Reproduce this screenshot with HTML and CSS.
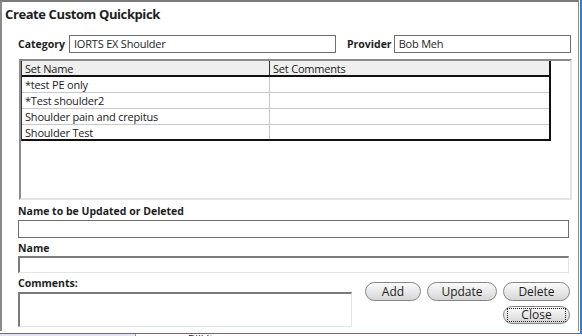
FILE: index.html
```html
<!DOCTYPE html>
<html>
<head>
<meta charset="utf-8">
<link rel="stylesheet" href="styles.css">
</head>
<body>
<div class="screen">
  <div class="dialog">
    <div class="title">Create Custom Quickpick</div>
    <div class="row-top">
      <span class="lbl">Category</span>
      <div class="input cat">IORTS EX Shoulder</div>
      <span class="lbl prov-lbl">Provider</span>
      <div class="input prov">Bob Meh</div>
    </div>
    <div class="grid">
      <div class="table">
        <div class="tr th"><div class="c1">Set Name</div><div class="c2">Set Comments</div></div>
        <div class="tr"><div class="c1">*test PE only</div><div class="c2"></div></div>
        <div class="tr"><div class="c1">*Test shoulder2</div><div class="c2"></div></div>
        <div class="tr"><div class="c1">Shoulder pain and crepitus</div><div class="c2"></div></div>
        <div class="tr last"><div class="c1">Shoulder Test</div><div class="c2"></div></div>
      </div>
    </div>
    <div class="lbl block l-upd">Name to be Updated or Deleted</div>
    <div class="input wide upd"></div>
    <div class="lbl block l-name">Name</div>
    <div class="input wide sunken name-in"></div>
    <div class="bottom">
      <div class="comments">
        <div class="lbl block l-com">Comments:</div>
        <div class="input area sunken"></div>
      </div>
      <div class="buttons">
        <div class="btn-row">
          <div class="btn add">Add</div>
          <div class="btn upd-btn">Update</div>
          <div class="btn del">Delete</div>
        </div>
        <div class="btn-row">
          <div class="btn close"><span class="focus">Close</span></div>
        </div>
      </div>
    </div>
  </div>
  <div class="edge"></div>
</div>
<div class="taskbar">
  <div class="tb-left"></div>
  <div class="tb-text">Bill Items</div>
</div>
</body>
</html>
```
FILE: styles.css
```css
html, body {
  margin: 0;
  padding: 0;
  width: 582px;
  height: 336px;
  overflow: hidden;
  background: #ffffff;
  font-family: "Open Sans", "Noto Sans", sans-serif;
  color: #1a1a1a;
}
.screen {
  display: flex;
  height: 333px;
}
.dialog {
  width: 579px;
  height: 331px;
  box-sizing: border-box;
  border-top: 2px solid #7a7a7a;
  border-left: 2px solid #8a8a8a;
  border-right: 1px solid #8a8a8a;
  padding-left: 16px;
  background: #fff;
}
.edge {
  width: 3px;
  border-right: 2px solid #2a82d8;
  box-sizing: border-box;
}
.title {
  font-weight: 700;
  font-size: 13px;
  letter-spacing: -0.4px;
  line-height: 18px;
  margin-top: 3px;
  margin-left: -13px;
  color: #1e1e1e;
}
.lbl {
  font-weight: 700;
  font-size: 10.5px;
  color: #1e1e1e;
  white-space: nowrap;
}
.row-top {
  display: flex;
  align-items: center;
  margin-top: 12px;
  height: 18px;
}
.input {
  box-sizing: border-box;
  border: 1px solid #6e6e6e;
  background: #fff;
  font-size: 11px;
  letter-spacing: -0.2px;
  line-height: 16px;
  padding-left: 4px;
  color: #1e1e1e;
  height: 18px;
}
.cat {
  width: 267px;
  margin-left: 4px;
}
.prov-lbl {
  margin-left: 11px;
}
.prov {
  width: 177px;
  margin-left: 2px;
}
.grid {
  margin-top: 6px;
  margin-left: 1px;
  width: 553px;
  height: 141px;
  box-sizing: border-box;
  border-top: 2px solid #8c8c8c;
  border-left: 2px solid #8c8c8c;
  border-right: 2px solid #e4e4e4;
  border-bottom: 2px solid #e4e4e4;
}
.table {
  width: 530px;
  box-sizing: border-box;
  border-left: 1px solid #333;
  border-right: 2px solid #111;
}
.tr {
  display: flex;
  height: 16px;
  box-sizing: border-box;
  border-bottom: 1px solid #c8c8c8;
  font-size: 11px;
  letter-spacing: -0.2px;
  line-height: 15px;
}
.tr.th {
  background: #efefef;
  border-bottom: 2px solid #111;
}
.tr.last {
  border-bottom: 2px solid #111;
}
.c1 {
  width: 248px;
  box-sizing: border-box;
  padding-left: 3px;
  border-right: 1px solid #c8c8c8;
  white-space: nowrap;
}
.th .c1 {
  border-right: 1px solid #333;
}
.c2 {
  flex: 1;
  padding-left: 3px;
}
.block {
  display: block;
  line-height: 14px;
}
.l-upd { margin-top: 4px; }
.wide {
  width: 551px;
}
.upd { margin-top: 2px; }
.l-name { margin-top: 3px; }
.sunken {
  border-top: 2px solid #7a7a7a;
  border-left: 2px solid #7a7a7a;
  border-right: 1px solid #e4e4e4;
  border-bottom: 1px solid #e4e4e4;
}
.name-in {
  margin-top: 1px;
  height: 17px;
}
.bottom {
  display: flex;
  justify-content: space-between;
  margin-top: 3px;
  width: 552px;
}
.l-com { margin-bottom: 2px; }
.area {
  width: 334px;
  height: 35px;
}
.buttons {
  display: flex;
  flex-direction: column;
  align-items: flex-end;
  gap: 5px;
  margin-top: 6px;
}
.btn-row {
  display: flex;
  gap: 6px;
}
.btn {
  box-sizing: border-box;
  height: 19px;
  border: 1px solid #858585;
  border-radius: 10px;
  background: linear-gradient(#fbfbfb, #e9e9e9 50%, #d6d6d6);
  font-size: 12px;
  line-height: 17px;
  text-align: center;
  color: #1e1e1e;
}
.add { width: 56px; }
.upd-btn { width: 70px; }
.del { width: 67px; }
.close {
  width: 67px;
  height: 18px;
  padding: 1px 3px;
  line-height: 14px;
}
.focus {
  display: block;
  border: 1px dotted #222;
  height: 14px;
  box-sizing: border-box;
  line-height: 12px;
}
.taskbar {
  height: 3px;
  border-top: 1px solid #2a7bd0;
  display: flex;
  overflow: hidden;
}
.tb-left {
  width: 135px;
  background: #dce8f4;
  border-right: 1px solid #8a9bb0;
}
.tb-text {
  margin-left: 52px;
  font-size: 11px;
  line-height: 11px;
  margin-top: -1px;
  color: #222;
}
```
